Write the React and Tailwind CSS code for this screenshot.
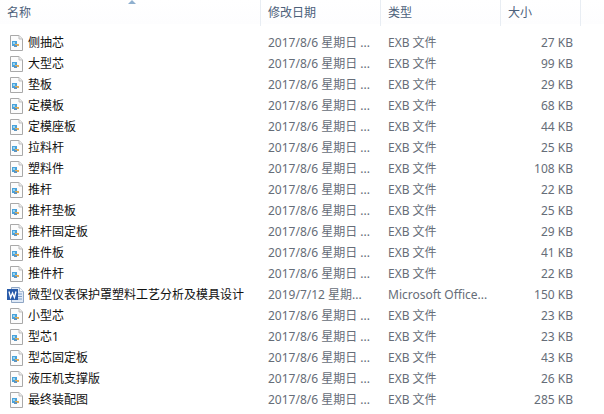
const files = [
  ['侧抽芯', '2017/8/6 星期日 ...', 'EXB 文件', '27 KB'],
  ['大型芯', '2017/8/6 星期日 ...', 'EXB 文件', '99 KB'],
  ['垫板', '2017/8/6 星期日 ...', 'EXB 文件', '29 KB'],
  ['定模板', '2017/8/6 星期日 ...', 'EXB 文件', '68 KB'],
  ['定模座板', '2017/8/6 星期日 ...', 'EXB 文件', '44 KB'],
  ['拉料杆', '2017/8/6 星期日 ...', 'EXB 文件', '25 KB'],
  ['塑料件', '2017/8/6 星期日 ...', 'EXB 文件', '108 KB'],
  ['推杆', '2017/8/6 星期日 ...', 'EXB 文件', '22 KB'],
  ['推杆垫板', '2017/8/6 星期日 ...', 'EXB 文件', '25 KB'],
  ['推杆固定板', '2017/8/6 星期日 ...', 'EXB 文件', '29 KB'],
  ['推件板', '2017/8/6 星期日 ...', 'EXB 文件', '41 KB'],
  ['推件杆', '2017/8/6 星期日 ...', 'EXB 文件', '22 KB'],
  ['微型仪表保护罩塑料工艺分析及模具设计', '2019/7/12 星期...', 'Microsoft Office...', '150 KB', true],
  ['小型芯', '2017/8/6 星期日 ...', 'EXB 文件', '23 KB'],
  ['型芯1', '2017/8/6 星期日 ...', 'EXB 文件', '23 KB'],
  ['型芯固定板', '2017/8/6 星期日 ...', 'EXB 文件', '43 KB'],
  ['液压机支撑版', '2017/8/6 星期日 ...', 'EXB 文件', '26 KB'],
  ['最终装配图', '2017/8/6 星期日 ...', 'EXB 文件', '285 KB'],
];

function ExbIcon() {
  return (
    <svg width="16" height="16" viewBox="0 0 16 16" className="shrink-0">
      <path d="M2.5 .5H11L14.5 4V15.5H2.5Z" fill="#fcfcfc" stroke="#a9a9a9" />
      <path d="M11 .5V4H14.5" fill="#ececec" stroke="#bdbdbd" />
      <rect x="4" y="6" width="5" height="5" fill="#4aa3dc" />
      <rect x="5" y="7" width="2" height="2" fill="#9ad6f0" />
      <rect x="7" y="9" width="4" height="2" fill="#e3ad55" />
      <rect x="6" y="10" width="3" height="2" fill="#5f95bf" />
    </svg>
  );
}

function WordIcon() {
  return (
    <svg width="17" height="16" viewBox="0 0 17 16" className="shrink-0">
      <path d="M4.5 .5H12.5L16.5 4.5V15.5H4.5Z" fill="#dfe9f6" stroke="#8fa6c4" />
      <path d="M12.5 .5V4.5H16.5" fill="#fff" stroke="#a8bbd3" />
      <path d="M11 7H15M11 9.5H15M11 12H15" stroke="#7f9fc9" />
      <rect x="0" y="2" width="11" height="11" fill="#2a5caa" />
      <path d="M2 4.5L3.6 10.5L5.5 6L7.4 10.5L9 4.5" fill="none" stroke="#fff" strokeWidth="1.3" />
    </svg>
  );
}

export default function App() {
  return (
    <div className="w-[604px] h-[414px] overflow-hidden bg-white text-[12px] font-['Noto_Sans','Noto_Sans_CJK_SC',sans-serif]">
      {/* Header */}
      <div className="relative grid grid-cols-[261px_120px_120px_80px] h-[24px] leading-[26px] text-[#4c607a] bg-gradient-to-b from-white to-[#fdfdfe]">
        <div className="pl-[7px] border-r border-[#e8edf3]">名称</div>
        <div className="pl-[7px] border-r border-[#e8edf3]">修改日期</div>
        <div className="pl-[7px] border-r border-[#e8edf3]">类型</div>
        <div className="pl-[7px] border-r border-[#e8edf3]">大小</div>
        <svg width="8" height="4" viewBox="0 0 8 4" className="absolute left-[128px] top-0">
          <path d="M4 0L8 4H0Z" fill="#8fb0cf" />
        </svg>
      </div>

      {/* Rows */}
      <div className="pt-[8px]">
        {files.map(([name, date, type, size, isWord]) => (
          <div key={name} className="grid grid-cols-[261px_120px_120px_80px] h-[21px] leading-[21px] items-center">
            <div className={`flex items-center ${isWord ? 'pl-[7px] gap-[4px]' : 'pl-[8px] gap-[4px]'} text-[#111]`}>
              {isWord ? <WordIcon /> : <ExbIcon />}
              <span className="whitespace-nowrap">{name}</span>
            </div>
            <div className="pl-[7px] text-[#666d78] whitespace-nowrap">{date}</div>
            <div className="pl-[7px] text-[#666d78] whitespace-nowrap">{type}</div>
            <div className="pr-[8px] text-right text-[#666d78] whitespace-nowrap">{size}</div>
          </div>
        ))}
      </div>
    </div>
  );
}
